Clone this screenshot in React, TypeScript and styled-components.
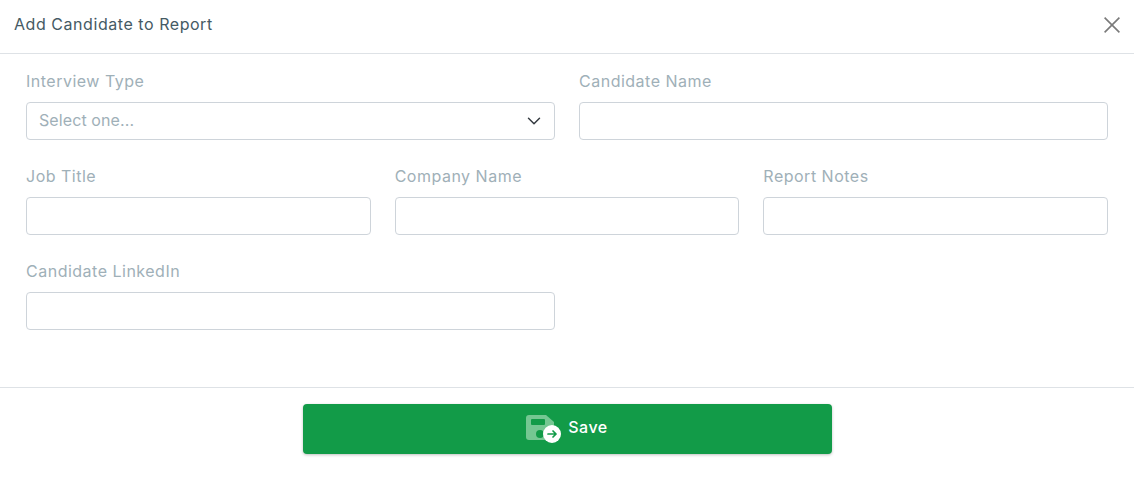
import styled, { createGlobalStyle } from 'styled-components'
import { ChevronDown } from 'lucide-react'

const GlobalStyle = createGlobalStyle`
  html, body {
    margin: 0;
    padding: 0;
    background: #fff;
    font-family: Inter, "Open Sans", sans-serif;
  }
  * {
    box-sizing: border-box;
  }
`

const Modal = styled.div`
  width: 1134px;
  height: 484px;
  display: flex;
  flex-direction: column;
  background: #fff;
  overflow: hidden;
`

const Header = styled.header`
  height: 54px;
  flex: none;
  display: flex;
  align-items: center;
  justify-content: space-between;
  padding: 0 14px 6px 14px;
  border-bottom: 1px solid #dee2e6;
`

const Title = styled.h5`
  margin: 0;
  color: #455a64;
  font-size: 16px;
  font-weight: 400;
  letter-spacing: 0.55px;
`

const CloseButton = styled.button`
  display: flex;
  padding: 0;
  border: 0;
  background: none;
  color: #7a7a7a;
  margin-top: 3px;
`

const Body = styled.div`
  height: 333px;
  flex: none;
  padding: 16px 26px 0;
  display: flex;
  flex-direction: column;
  gap: 24px;
`

const Row = styled.div<{ $columns: number }>`
  display: grid;
  grid-template-columns: repeat(${(p) => p.$columns}, 1fr);
  column-gap: 24px;
`

const Field = styled.div`
  display: flex;
  flex-direction: column;
  height: 71px;
`

const Label = styled.label`
  height: 32px;
  line-height: 22px;
  color: #9fb0b8;
  font-size: 16px;
  letter-spacing: 0.5px;
`

const Input = styled.input`
  width: 100%;
  height: 38px;
  padding: 0 12px;
  border: 1px solid #ced4da;
  border-radius: 4px;
  background: #fff;
  outline: none;
`

const SelectBox = styled.div`
  height: 38px;
  display: flex;
  align-items: center;
  justify-content: space-between;
  padding: 0 9px 2px 12px;
  border: 1px solid #ced4da;
  border-radius: 4px;
  color: #9fb0b8;
  font-size: 16px;
  letter-spacing: 0.1px;
  svg {
    color: #343a40;
    margin-bottom: -2px;
  }
`

const Footer = styled.footer`
  flex: 1;
  display: flex;
  justify-content: center;
  align-items: flex-start;
  padding-top: 16px;
  border-top: 1px solid #dee2e6;
`

const SaveButton = styled.button`
  width: 529px;
  height: 50px;
  display: flex;
  align-items: center;
  justify-content: center;
  gap: 7px;
  border: 0;
  border-radius: 4px;
  background: #129b48;
  color: #fff;
  font-family: inherit;
  font-size: 16px;
  font-weight: 500;
  letter-spacing: 0.5px;
  box-shadow: 0 1px 3px rgba(0, 0, 0, 0.25);
`

const SaveText = styled.span`
  margin-top: -4px;
`

function CloseIcon() {
  return (
    <svg width="16" height="16" viewBox="0 0 16 16" aria-hidden="true">
      <path d="M0.6 0.6l14.8 14.8M15.4 0.6L0.6 15.4" fill="none" stroke="currentColor" strokeWidth="1.6" />
    </svg>
  )
}

function SaveIcon() {
  return (
    <svg width="35" height="28" viewBox="0 0 35 28" aria-hidden="true">
      <path
        d="M3 0h17l8 7v15a3 3 0 0 1-3 3H3a3 3 0 0 1-3-3V3a3 3 0 0 1 3-3z"
        fill="#75c792"
      />
      <rect x="5" y="4" width="14" height="6" rx="1" fill="#129b48" />
      <circle cx="14" cy="19" r="4" fill="#129b48" />
      <circle cx="26" cy="19" r="9" fill="#fff" />
      <path
        d="M22 19h8M27 16l3 3-3 3"
        fill="none"
        stroke="#129b48"
        strokeWidth="1.7"
        strokeLinecap="round"
        strokeLinejoin="round"
      />
    </svg>
  )
}

export default function App() {
  return (
    <>
      <GlobalStyle />
      <Modal>
        <Header>
          <Title>Add Candidate to Report</Title>
          <CloseButton aria-label="Close">
            <CloseIcon />
          </CloseButton>
        </Header>
        <Body>
          <Row $columns={2}>
            <Field>
              <Label>Interview Type</Label>
              <SelectBox>
                Select one...
                <ChevronDown size={22} strokeWidth={1.6} />
              </SelectBox>
            </Field>
            <Field>
              <Label>Candidate Name</Label>
              <Input />
            </Field>
          </Row>
          <Row $columns={3}>
            <Field>
              <Label>Job Title</Label>
              <Input />
            </Field>
            <Field>
              <Label>Company Name</Label>
              <Input />
            </Field>
            <Field>
              <Label>Report Notes</Label>
              <Input />
            </Field>
          </Row>
          <Row $columns={2}>
            <Field>
              <Label>Candidate LinkedIn</Label>
              <Input />
            </Field>
          </Row>
        </Body>
        <Footer>
          <SaveButton>
            <SaveIcon />
            <SaveText>Save</SaveText>
          </SaveButton>
        </Footer>
      </Modal>
    </>
  )
}
